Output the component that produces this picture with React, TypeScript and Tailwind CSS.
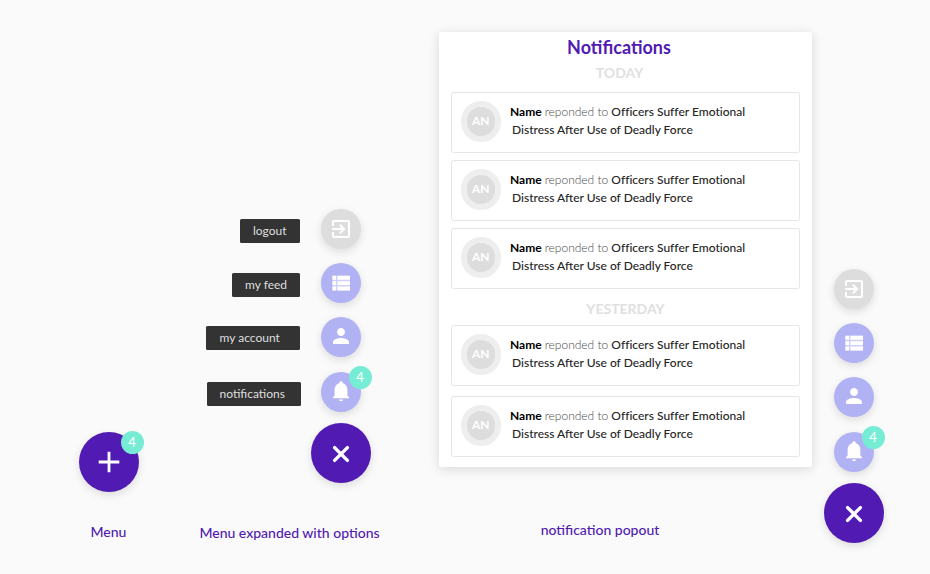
import type { ReactNode } from "react";
import { MdExitToApp, MdPerson } from "react-icons/md";

function Badge({ className }: { className: string }) {
  return (
    <span
      className={`absolute flex size-[23px] items-center justify-center rounded-full bg-[#77ecd5] pr-px pb-px text-[13px] leading-none text-white ${className}`}
    >
      4
    </span>
  );
}

function MainButton({ children, badge = false }: { children: ReactNode; badge?: boolean }) {
  return (
    <button className="relative flex size-[60px] shrink-0 items-center justify-center rounded-full bg-[#511bb3] shadow-[0_3px_9px_rgba(0,0,0,0.12)]">
      {children}
      {badge && <Badge className="-top-px left-[42px]" />}
    </button>
  );
}

function PlusIcon() {
  return (
    <svg width="22" height="22" viewBox="0 0 22 22" stroke="white" strokeWidth="2.8">
      <path d="M11 0.7v20.6M0.7 11h20.6" />
    </svg>
  );
}

function CrossIcon() {
  return (
    <svg className="mt-[2px]" width="20" height="20" viewBox="0 0 20 20" stroke="white" strokeWidth="3.4" strokeLinecap="round">
      <path d="M3.6 3.6l12.8 12.8M16.4 3.6L3.6 16.4" />
    </svg>
  );
}

function ListIcon() {
  return (
    <svg width="24" height="24" viewBox="0 0 24 24" fill="currentColor">
      <path opacity="0.4" d="M3.4 4.7h17.6v14.8H3.4z" />
      <path d="M3.4 4.7H7v4.1H3.4zM8.4 4.7H21v4.1H8.4zM3.4 10.2H7V14H3.4zM8.4 10.2H21V14H8.4zM3.4 15.4H7v4.1H3.4zM8.4 15.4H21v4.1H8.4z" />
    </svg>
  );
}

function BellIcon() {
  return (
    <svg className="mb-px" width="24" height="24" viewBox="0 0 24 24" fill="currentColor">
      <path d="M12 22.3c1.1 0 2-.8 2-1.7h-4c0 .9.9 1.7 2 1.7zM18.4 16.7v-5.8c0-3.3-1.8-6-4.8-6.8v-.4c0-.8-.7-1.4-1.6-1.4s-1.6.6-1.6 1.4v.4c-3 .8-4.8 3.5-4.8 6.8v5.8L4 18.3v1h16v-1z" />
    </svg>
  );
}

function Option({ gray = false, badge = false, children }: { gray?: boolean; badge?: boolean; children: ReactNode }) {
  return (
    <button
      className={`relative flex size-10 shrink-0 items-center justify-center rounded-full text-2xl text-white shadow-[0_3px_9px_rgba(0,0,0,0.12)] ${gray ? "bg-[#dddddd]" : "bg-[#b1b2f3]"}`}
    >
      {children}
      {badge && <Badge className="-top-[5.5px] left-[28px]" />}
    </button>
  );
}

function Tip({ className, children }: { className: string; children: ReactNode }) {
  return (
    <span className={`flex h-6 items-center rounded-[1.5px] bg-[#333333] text-[12px] leading-none text-[#dfdfdf] ${className}`}>
      {children}
    </span>
  );
}

function Options({ labels = false }: { labels?: boolean }) {
  return (
    <div className="flex flex-col items-end gap-[14.2px]">
      <div className="flex items-center gap-[21px]">
        {labels && <Tip className="mt-1 w-[60px] pl-[13px]">logout</Tip>}
        <Option gray>
          <MdExitToApp />
        </Option>
      </div>
      <div className="flex items-center gap-[21px]">
        {labels && <Tip className="mt-1 w-[68px] pl-[13px]">my feed</Tip>}
        <Option>
          <ListIcon />
        </Option>
      </div>
      <div className="flex items-center gap-[21px]">
        {labels && <Tip className="mt-px w-[94px] pl-[13.5px]">my account</Tip>}
        <Option>
          <MdPerson className="mb-[2px]" />
        </Option>
      </div>
      <div className="flex items-center gap-5">
        {labels && <Tip className="mt-[5px] w-[94px] pl-[12.5px]">notifications</Tip>}
        <Option badge>
          <BellIcon />
        </Option>
      </div>
    </div>
  );
}

function Notification() {
  return (
    <li className="flex h-[61px] rounded-[2.5px] border border-[#e6e6e6] pt-2 pl-[8.5px]">
      <span className="flex size-[40.5px] shrink-0 items-center justify-center rounded-full border-6 border-[#eeeeee] bg-[#dddddd] text-[12px] font-bold text-white">
        AN
      </span>
      <p className="pt-[1.5px] pl-[9px] text-[12px] leading-[18.5px] font-medium whitespace-nowrap text-[#262626]">
        <b className="font-bold text-black">Name</b> <span className="font-light text-[#4a4a4a]">reponded to</span>{" "}
        <span className="tracking-[0.01px]">Officers Suffer Emotional</span>
        <br />
        <span className="pl-[2px]">Distress After Use of Deadly Force</span>
      </p>
    </li>
  );
}

function Caption({ className, children }: { className: string; children: ReactNode }) {
  return <h2 className={`text-center text-[14px] leading-5 font-medium whitespace-nowrap text-[#511bb3] ${className}`}>{children}</h2>;
}

export default function App() {
  return (
    <main className="flex h-[574px] w-[930px] overflow-hidden bg-[#fafafa] font-['Lato',sans-serif]">
      <section className="flex w-[190px] flex-col items-center pt-[432px] pl-[28px]">
        <MainButton badge>
          <PlusIcon />
        </MainButton>
        <Caption className="mt-[30px] pr-px">Menu</Caption>
      </section>

      <section className="flex w-[200px] flex-col items-end pt-[209px]">
        <div className="mr-[29px]">
          <Options labels />
        </div>
        <div className="mt-[11px] mr-[19px]">
          <MainButton>
            <CrossIcon />
          </MainButton>
        </div>
        <Caption className="mt-[40px] w-full pr-px">Menu expanded with options</Caption>
      </section>

      <section className="w-[422px] pt-8 pl-[49px]">
        <div className="h-[435px] rounded-[2px] bg-white px-3 pt-[3px] shadow-[0_2px_12px_rgba(0,0,0,0.14)]">
          <h1 className="pr-[13px] text-center text-[18px] leading-6 font-bold text-[#511bb3]">Notifications</h1>
          <h3 className="mt-1 pr-3 text-center text-[14px] leading-5 font-bold text-[#e0e0e0]">TODAY</h3>
          <ul className="mt-[9px] flex flex-col gap-[7px]">
            <Notification />
            <Notification />
            <Notification />
          </ul>
          <h3 className="mt-[10px] text-center text-[14px] leading-5 font-bold text-[#e0e0e0]">YESTERDAY</h3>
          <ul className="mt-[6px] flex flex-col gap-[10px]">
            <Notification />
            <Notification />
          </ul>
        </div>
        <Caption className="mt-[53px] pr-[51px]">notification popout</Caption>
      </section>

      <section className="flex w-[118px] flex-col pt-[269px] pl-3">
        <div className="flex w-[60px] flex-col items-center">
          <Options />
          <div className="mt-[11px]">
            <MainButton>
              <CrossIcon />
            </MainButton>
          </div>
        </div>
      </section>
    </main>
  );
}
